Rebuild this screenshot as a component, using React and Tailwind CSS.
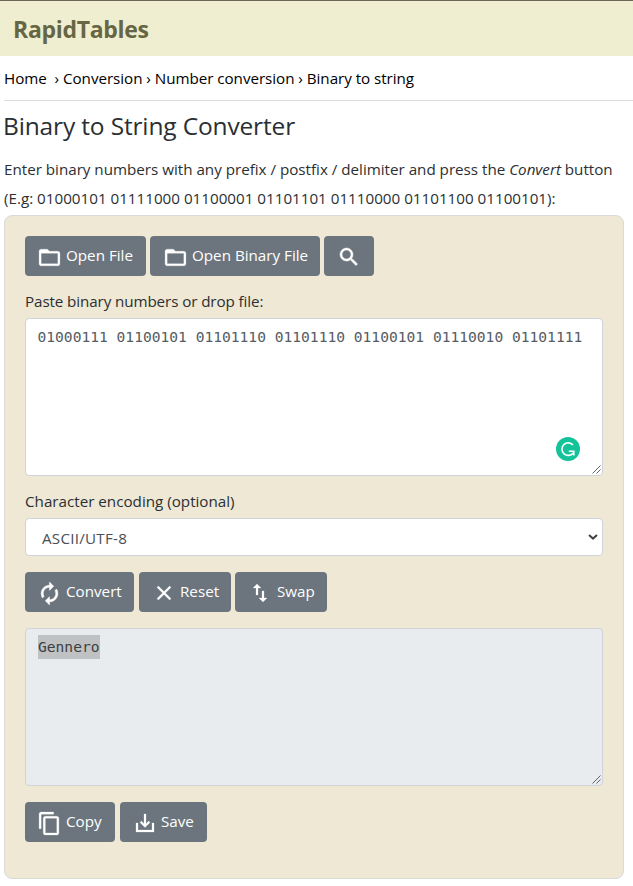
import React from "react";

const icons = {
  folder: "M20 6h-8l-2-2H4c-1.1 0-2 .9-2 2v12c0 1.1.9 2 2 2h16c1.1 0 2-.9 2-2V8c0-1.1-.9-2-2-2zm0 12H4V8h16v10z",
  search: "M15.5 14h-.79l-.28-.27A6.471 6.471 0 0 0 16 9.5 6.5 6.5 0 1 0 9.5 16c1.61 0 3.09-.59 4.23-1.57l.27.28v.79l5 4.99L20.49 19l-4.99-5zm-6 0C7.01 14 5 11.99 5 9.5S7.01 5 9.5 5 14 7.01 14 9.5 11.99 14 9.5 14z",
  convert: "M12 6v3l4-4-4-4v3c-4.42 0-8 3.58-8 8 0 1.57.46 3.03 1.24 4.26L6.7 14.8c-.45-.83-.7-1.79-.7-2.8 0-3.31 2.69-6 6-6zm6.76 1.74L17.3 9.2c.44.84.7 1.79.7 2.8 0 3.31-2.69 6-6 6v-3l-4 4 4 4v-3c4.42 0 8-3.58 8-8 0-1.57-.46-3.03-1.24-4.26z",
  close: "M19 6.41L17.59 5 12 10.59 6.41 5 5 6.41 10.59 12 5 17.59 6.41 19 12 13.41 17.59 19 19 17.59 13.41 12z",
  swap: "M16 17.01V10h-2v7.01h-3L15 21l4-3.99h-3zM9 3L5 6.99h3V14h2V6.99h3L9 3z",
  copy: "M16 1H4c-1.1 0-2 .9-2 2v14h2V3h12V1zm3 4H8c-1.1 0-2 .9-2 2v14c0 1.1.9 2 2 2h11c1.1 0 2-.9 2-2V7c0-1.1-.9-2-2-2zm0 16H8V7h11v14z",
  save: "M19 12v7H5v-7H3v9h18v-9h-2zm-6 .67l2.59-2.58L17 11.5l-5 5-5-5 1.41-1.41L11 12.67V3h2z",
};

function Button({ icon, children, className, iconClass = "h-6 w-6", weight = 0.25 }) {
  return (
    <button className={`flex h-10 items-center rounded-[4px] bg-[#6c757d] text-white ${className}`}>
      <svg viewBox="0 0 24 24" fill="currentColor" stroke="currentColor" strokeWidth={weight} className={`shrink-0 ${iconClass}`}>
        <path d={icons[icon]} />
      </svg>
      {children && <span className="relative -top-px whitespace-nowrap">{children}</span>}
    </button>
  );
}

function Grip() {
  return (
    <svg viewBox="0 0 9 9" className="absolute bottom-px right-px h-[9px] w-[9px]" stroke="#50555a" strokeWidth="0.9">
      <path d="M0.5 8.5L8.5 0.5M4.5 8.5L8.5 4.5" />
    </svg>
  );
}

export default function App() {
  return (
    <div className="h-[886px] w-[633px] overflow-hidden bg-white font-['Open_Sans',sans-serif] text-[15.2px] leading-6 text-[#2b2f33]">
      <header className="flex h-14 items-center border-t border-[#6b6454] bg-[#efeed0] pl-[13px] pt-px">
        <span className="text-[23px] font-bold tracking-[-0.3px] text-[#666644]">RapidTables</span>
      </header>
      <nav className="ml-1 flex h-[45px] items-center whitespace-pre border-b border-[#dcdcdc] text-black tracking-[-0.04px]">
        Home  › Conversion › Number conversion › Binary to string
      </nav>
      <main className="pl-1">
        <h1 className="-ml-px mt-[7px] h-9 text-[24.5px] leading-9 tracking-[-0.15px]">Binary to String Converter</h1>
        <div className="mt-[11px] h-[60px] whitespace-nowrap leading-[29px]">
          <p className="tracking-[-0.01px]">Enter binary numbers with any prefix / postfix / delimiter and press the <i>Convert</i> button</p>
          <p className="tracking-[0px]">(E.g: 01000101 01111000 01100001 01101101 01110000 01101100 01100101):</p>
        </div>
        <section className="h-[664px] w-[620px] rounded-[8px] border border-[#dadbd8] bg-[#eee8d5] px-5 pt-5">
          <div className="flex gap-1">
            <Button icon="folder" className="w-[121px] gap-1 pl-3" iconClass="h-[25px] w-[25px] translate-y-px">Open File</Button>
            <Button icon="folder" className="w-[170px] gap-1 pl-[13px]" iconClass="h-[25px] w-[25px] translate-y-px">Open Binary File</Button>
            <Button icon="search" className="w-[50px] justify-center" iconClass="h-6 w-6 translate-y-px" weight={0.5} />
          </div>
          <p className="mt-[13px] h-[29px] tracking-[-0.1px]">Paste binary numbers or drop file:</p>
          <div className="relative h-[158px] w-[578px] rounded-[4px] border border-[#ced4da] bg-white pl-[11.5px] pt-[6px] font-['DejaVu_Sans_Mono',monospace] text-[14.6px] text-[#565d64] whitespace-nowrap">
            01000111 01100101 01101110 01101110 01100101 01110010 01101111
            <svg viewBox="0 0 24 24" className="absolute bottom-[14px] right-[22px] h-6 w-6" fill="none">
              <circle cx="12" cy="12" r="12" fill="#15c39a" />
              <path d="M17 8A6.3 6.3 0 1 0 17.2 16M12.8 14.3h5v4.2" stroke="white" strokeWidth="1.6" />
            </svg>
            <Grip />
          </div>
          <p className="mt-[13px] h-[29px]">Character encoding (optional)</p>
          <div className="flex h-[38px] w-[578px] items-center justify-between rounded-[4px] border border-[#ced4da] bg-white pl-4 pr-1 text-[#495057]">
            <span className="relative top-px tracking-[0.25px]">ASCII/UTF-8</span>
            <svg viewBox="0 0 10 6" className="h-[6px] w-[10px]" fill="none" stroke="#444" strokeWidth="2">
              <path d="M1 1l4 3.6L9 1" />
            </svg>
          </div>
          <div className="mt-4 flex">
            <Button icon="convert" className="mr-[5px] w-[109px] gap-1 pl-3" iconClass="h-[25px] w-[25px] translate-y-px" weight={0.5}>Convert</Button>
            <Button icon="close" className="mr-1 w-[92px] gap-1 pl-[13px]" iconClass="h-6 w-6 translate-y-px">Reset</Button>
            <Button icon="swap" className="w-[92px] gap-[5px] pl-[13px]" iconClass="h-6 w-6 translate-y-px">Swap</Button>
          </div>
          <div className="relative mt-4 h-[158px] w-[578px] rounded-[4px] border border-[#ced4da] bg-[#e9ecef] pl-3 pt-[6px] font-['DejaVu_Sans_Mono',monospace] text-[14.6px] text-[#3c4044]">
            <span className="inline-block h-6 bg-[#c0c1c2]">Gennero</span>
            <Grip />
          </div>
          <div className="mt-4 flex gap-[5px]">
            <Button icon="copy" className="w-[90px] gap-1 pl-3" iconClass="h-[25px] w-[25px] translate-y-px">Copy</Button>
            <Button icon="save" className="w-[87px] gap-[4px] pl-[13px]" iconClass="h-6 w-6 translate-y-px">Save</Button>
          </div>
        </section>
      </main>
    </div>
  );
}
